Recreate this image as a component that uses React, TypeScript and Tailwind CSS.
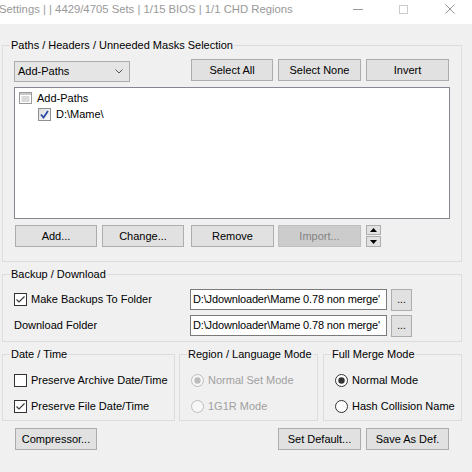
import type { ReactNode } from 'react';

function Btn({ children, className = '', disabled = false }: { children: ReactNode; className?: string; disabled?: boolean }) {
  return (
    <button
      className={`flex h-[22px] items-center justify-center border leading-[13px] ${
        disabled ? 'border-[#bfbfbf] bg-[#cccccc] text-[#838383]' : 'border-[#adadad] bg-[#e1e1e1] text-black'
      } ${className}`}
    >
      {children}
    </button>
  );
}

// win32 style group box: border with the caption sitting on the top line
function Group({ title, className = '', children }: { title: string; className?: string; children: ReactNode }) {
  return (
    <div className={`border border-[#dcdcdc] ${className}`}>
      <div className="-mt-[7px] ml-[7px] w-fit whitespace-nowrap bg-[#f0f0f0] px-[1px] leading-[13px]">{title}</div>
      <div className="pl-[11px]">{children}</div>
    </div>
  );
}

function Check({ checked }: { checked: boolean }) {
  return (
    <svg width="13" height="13" viewBox="0 0 13 13" className="shrink-0">
      <rect x="0.5" y="0.5" width="12" height="12" fill="#fff" stroke="#333" />
      {checked && <polyline points="2.5,6.5 5,9 10.5,3.5" fill="none" stroke="#333" strokeWidth="1.1" />}
    </svg>
  );
}

function Radio({ checked, disabled = false }: { checked: boolean; disabled?: boolean }) {
  const c = disabled ? '#bcbcbc' : '#333';
  return (
    <svg width="13" height="13" viewBox="0 0 13 13" className="shrink-0">
      <circle cx="6.5" cy="6.5" r="6" fill={disabled ? '#f7f7f7' : '#fff'} stroke={c} />
      {checked && <circle cx="6.5" cy="6.5" r="3.2" fill={c} />}
    </svg>
  );
}

function CheckRow({ label, checked }: { label: string; checked: boolean }) {
  return (
    <div className="flex h-[13px] items-center gap-[4px] whitespace-nowrap leading-[13px]">
      <Check checked={checked} />
      <span>{label}</span>
    </div>
  );
}

function RadioRow({ label, checked, disabled = false }: { label: string; checked: boolean; disabled?: boolean }) {
  return (
    <div className={`flex h-[13px] items-center gap-[4px] whitespace-nowrap leading-[13px] ${disabled ? 'text-[#a0a0a0]' : ''}`}>
      <Radio checked={checked} disabled={disabled} />
      <span>{label}</span>
    </div>
  );
}

function PathInput({ value }: { value: string }) {
  return (
    <div className="flex h-[21px] w-[197px] items-center overflow-hidden whitespace-nowrap border border-[#7a7a7a] bg-white pl-[2px] leading-[13px] tracking-[-0.15px]">
      {value}
    </div>
  );
}

export default function App() {
  const path = "D:\\Jdownloader\\Mame 0.78 non merge'";
  return (
    <div className="h-[472px] w-[472px] overflow-hidden bg-[#f0f0f0] font-['Liberation_Sans',Arial,sans-serif] text-[11px] text-black">
      {/* title bar */}
      <div className="flex h-[24px] items-center bg-white pb-[6px] text-[11.3px] text-[#999]">
        <span className="-ml-[1px] flex-1 whitespace-nowrap">Settings |  | 4429/4705 Sets | 1/15 BIOS | 1/1 CHD Regions</span>
        <div className="h-[1px] w-[10px] bg-[#999]" />
        <div className="ml-[36px] h-[9px] w-[9px] border border-[#ccc]" />
        <svg width="10" height="10" viewBox="0 0 10 10" className="ml-[37px] mr-[17px]">
          <path d="M0.5 0.5 L9.5 9.5 M9.5 0.5 L0.5 9.5" stroke="#999" strokeWidth="1" />
        </svg>
      </div>

      {/* paths / headers */}
      <Group title="Paths / Headers / Unneeded Masks Selection" className="ml-[2px] mt-[21px] w-[460px] pb-[14px]">
        <div className="mt-[7px] flex items-start">
          <div className="mt-[2px] flex h-[21px] w-[116px] items-center justify-between border border-[#acacac] bg-[#e5e5e5] pl-[3px] pr-[6px] leading-[13px]">
            <span>Add-Paths</span>
            <svg width="8" height="5" viewBox="0 0 8 5">
              <polyline points="0.5,0.5 4,4 7.5,0.5" fill="none" stroke="#555" />
            </svg>
          </div>
          <Btn className="ml-[61px] w-[82px]">Select All</Btn>
          <Btn className="ml-[5px] w-[83px]">Select None</Btn>
          <Btn className="ml-[5px] w-[83px]">Invert</Btn>
        </div>
        <div className="mt-[5px] h-[132px] w-[436px] border border-[#828790] bg-white pt-[2px] leading-[13px]">
          <div className="flex h-[16px] items-center pl-[4px]">
            <svg width="13" height="12" viewBox="0 0 13 12">
              <rect x="0.5" y="0.5" width="12" height="11" fill="#fff" stroke="#9a9a9a" />
              <rect x="1" y="1" width="11" height="2" fill="#c8c8c8" />
              <path d="M2.5 5 H10.5 M2.5 7 H10.5 M2.5 9 H10.5" stroke="#b5b5b5" />
            </svg>
            <span className="ml-[5px]">Add-Paths</span>
          </div>
          <div className="flex h-[16px] items-center pl-[23px]">
            <svg width="13" height="13" viewBox="0 0 13 13">
              <defs>
                <linearGradient id="tg" x1="0" y1="0" x2="1" y2="1">
                  <stop offset="0" stopColor="#dcdcdc" />
                  <stop offset="1" stopColor="#fbfbfb" />
                </linearGradient>
              </defs>
              <rect x="0.5" y="0.5" width="12" height="12" fill="url(#tg)" stroke="#8e8f8f" />
              <polyline points="3,6.5 5.5,9.5 10,3" fill="none" stroke="#2b4aa8" strokeWidth="1.8" />
            </svg>
            <span className="ml-[5px]">D:\Mame\</span>
          </div>
        </div>
        <div className="mt-[6px] flex">
          <Btn className="ml-[1px] w-[82px]">Add...</Btn>
          <Btn className="ml-[5px] w-[82px]">Change...</Btn>
          <Btn className="ml-[7px] w-[83px]">Remove</Btn>
          <Btn disabled className="ml-[4px] w-[83px]">Import...</Btn>
          <div className="ml-[5px] flex w-[15px] flex-col gap-[1px]">
            <div className="flex h-[10px] items-center justify-center border border-[#adadad] bg-[#e1e1e1]">
              <svg width="7" height="4" viewBox="0 0 7 4"><polygon points="3.5,0 7,4 0,4" fill="#000" /></svg>
            </div>
            <div className="flex h-[11px] items-center justify-center border border-[#adadad] bg-[#e1e1e1]">
              <svg width="7" height="4" viewBox="0 0 7 4"><polygon points="0,0 7,0 3.5,4" fill="#000" /></svg>
            </div>
          </div>
        </div>
      </Group>

      {/* backup / download */}
      <Group title="Backup / Download" className="ml-[2px] mt-[12px] w-[460px] pb-[5px]">
        <div className="mt-[8px] flex h-[21px] items-center">
          <div className="w-[176px]">
            <CheckRow label="Make Backups To Folder" checked />
          </div>
          <PathInput value={path} />
          <Btn className="ml-[4px] h-[18px] w-[21px] text-[10px]">...</Btn>
        </div>
        <div className="mt-[5px] flex h-[21px] items-center">
          <div className="w-[176px] leading-[13px]">Download Folder</div>
          <PathInput value={path} />
          <Btn className="ml-[4px] h-[18px] w-[21px] text-[10px]">...</Btn>
        </div>
      </Group>

      {/* date / region / merge */}
      <div className="ml-[2px] mt-[12px] flex">
        <Group title="Date / Time" className="w-[173px] pb-[7px]">
          <div className="mt-[13px] flex flex-col gap-[13px]">
            <CheckRow label="Preserve Archive Date/Time" checked={false} />
            <CheckRow label="Preserve File Date/Time" checked />
          </div>
        </Group>
        <Group title="Region / Language Mode" className="ml-[4px] w-[139px] pb-[7px]">
          <div className="mt-[13px] flex flex-col gap-[13px]">
            <RadioRow label="Normal Set Mode" checked disabled />
            <RadioRow label="1G1R Mode" checked={false} disabled />
          </div>
        </Group>
        <Group title="Full Merge Mode" className="ml-[5px] w-[139px] pb-[7px]">
          <div className="mt-[13px] flex flex-col gap-[13px]">
            <RadioRow label="Normal Mode" checked />
            <RadioRow label="Hash Collision Name" checked={false} />
          </div>
        </Group>
      </div>

      {/* bottom buttons */}
      <div className="mt-[7px] flex">
        <Btn className="ml-[15px] w-[82px]">Compressor...</Btn>
        <Btn className="ml-[181px] w-[83px]">Set Default...</Btn>
        <Btn className="ml-[5px] w-[83px]">Save As Def.</Btn>
      </div>
    </div>
  );
}
